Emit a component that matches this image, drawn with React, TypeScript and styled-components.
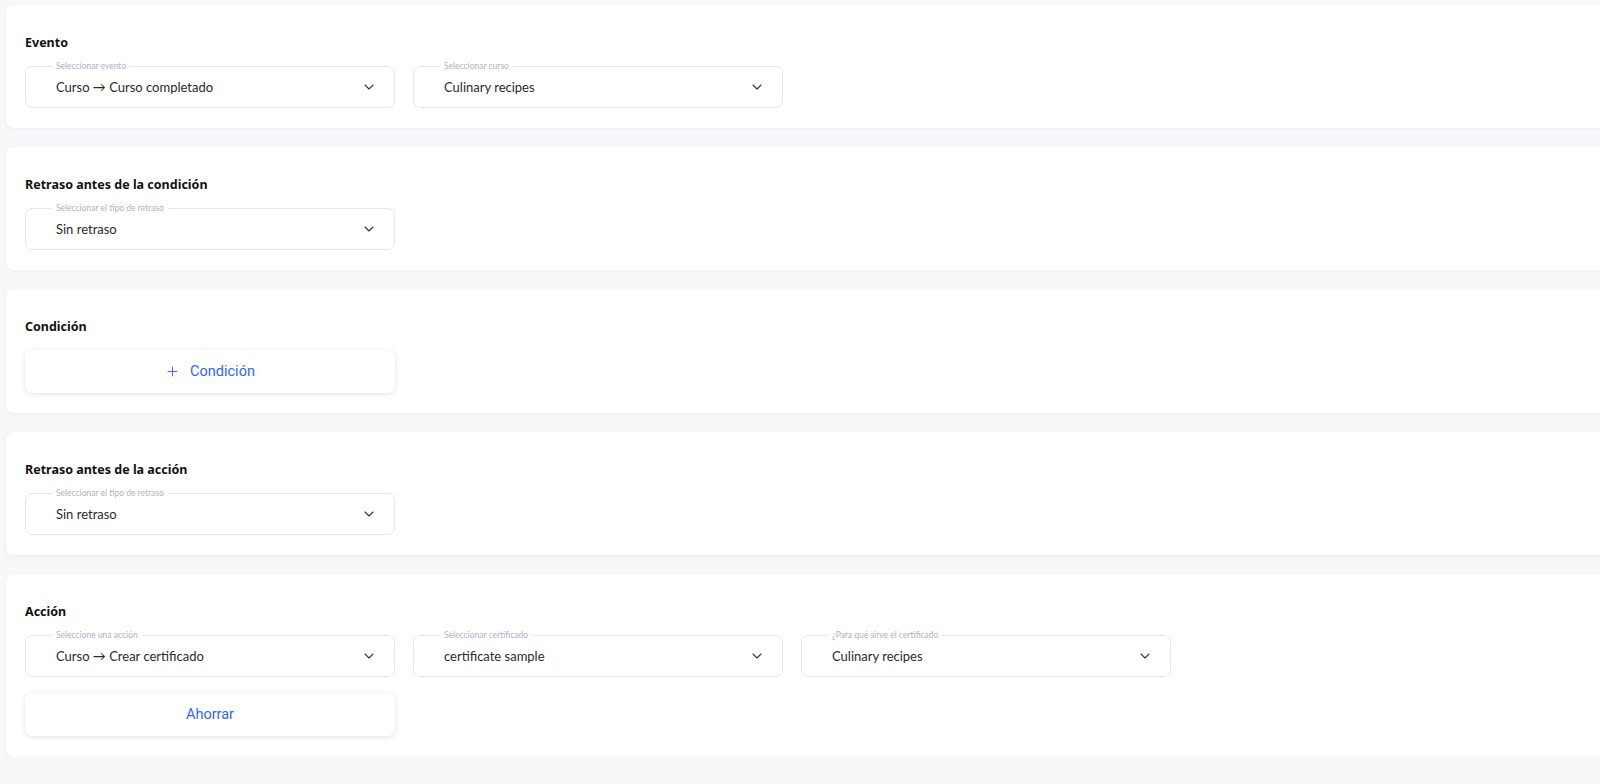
import React from 'react';
import styled, { createGlobalStyle } from 'styled-components';
import { ChevronDown, Plus } from 'lucide-react';

const GlobalStyle = createGlobalStyle`
  html, body {
    margin: 0;
    padding: 0;
    background: #f7f8fa;
    overflow: hidden;
  }
  * { box-sizing: border-box; }
`;

const Page = styled.div`
  display: flex;
  flex-direction: column;
  gap: 19px;
  padding: 5px 0 0 6px;
  width: 1640px;
`;

const Card = styled.section`
  background: #ffffff;
  border-radius: 8px;
  box-shadow: 0 1px 4px rgba(40, 60, 110, 0.06);
  padding: 30px 19px 20px;
  display: flex;
  flex-direction: column;
  gap: 15px;
`;

const Heading = styled.h3`
  margin: 0;
  font-family: 'Noto Sans', 'Open Sans', sans-serif;
  font-weight: 700;
  font-size: 12.5px;
  line-height: 16px;
  color: #111;
`;

const Body = styled.div`
  display: flex;
  flex-direction: column;
  gap: 16px;
`;

const Row = styled.div`
  display: flex;
  gap: 18px;
`;

const SelectBox = styled.div`
  position: relative;
  width: 370px;
  height: 42px;
  border: 1px solid #e4e7ee;
  border-radius: 7px;
  display: flex;
  align-items: center;
  justify-content: space-between;
  padding: 0 17px 0 30px;
  font-family: Lato, 'Liberation Sans', sans-serif;
  font-size: 13px;
  color: #2a2a2a;
`;

const FloatLabel = styled.span`
  position: absolute;
  top: -6px;
  left: 26px;
  padding: 0 4px;
  background: #ffffff;
  font-family: Lato, 'Liberation Sans', sans-serif;
  font-size: 8.5px;
  line-height: 10px;
  color: #a8b3c7;
`;

const ActionButton = styled.button`
  width: 370px;
  height: 43px;
  border: none;
  border-radius: 7px;
  background: #ffffff;
  box-shadow: 0 1px 5px rgba(30, 45, 90, 0.14);
  display: flex;
  align-items: center;
  justify-content: center;
  gap: 10px;
  font-family: Roboto, 'Liberation Sans', sans-serif;
  font-weight: 400;
  font-size: 14.5px;
  color: #2f66f6;
  cursor: pointer;
`;

type SelectProps = { label: string; value: string };

const Select = ({ label, value }: SelectProps) => (
  <SelectBox>
    <FloatLabel>{label}</FloatLabel>
    <span>{value}</span>
    <ChevronDown size={16} strokeWidth={1.6} color="#333" />
  </SelectBox>
);

const App = () => (
  <>
    <GlobalStyle />
    <Page>
      <Card>
        <Heading>Evento</Heading>
        <Row>
          <Select label="Seleccionar evento" value="Curso → Curso completado" />
          <Select label="Seleccionar curso" value="Culinary recipes" />
        </Row>
      </Card>

      <Card>
        <Heading>Retraso antes de la condición</Heading>
        <Row>
          <Select label="Seleccionar el tipo de retraso" value="Sin retraso" />
        </Row>
      </Card>

      <Card>
        <Heading>Condición</Heading>
        <ActionButton>
          <Plus size={15} strokeWidth={1.5} />
          Condición
        </ActionButton>
      </Card>

      <Card>
        <Heading>Retraso antes de la acción</Heading>
        <Row>
          <Select label="Seleccionar el tipo de retraso" value="Sin retraso" />
        </Row>
      </Card>

      <Card>
        <Heading>Acción</Heading>
        <Body>
          <Row>
            <Select label="Seleccione una acción" value="Curso → Crear certificado" />
            <Select label="Seleccionar certificado" value="certificate sample" />
            <Select label="¿Para qué sirve el certificado" value="Culinary recipes" />
          </Row>
          <ActionButton>Ahorrar</ActionButton>
        </Body>
      </Card>
    </Page>
  </>
);

export default App;
